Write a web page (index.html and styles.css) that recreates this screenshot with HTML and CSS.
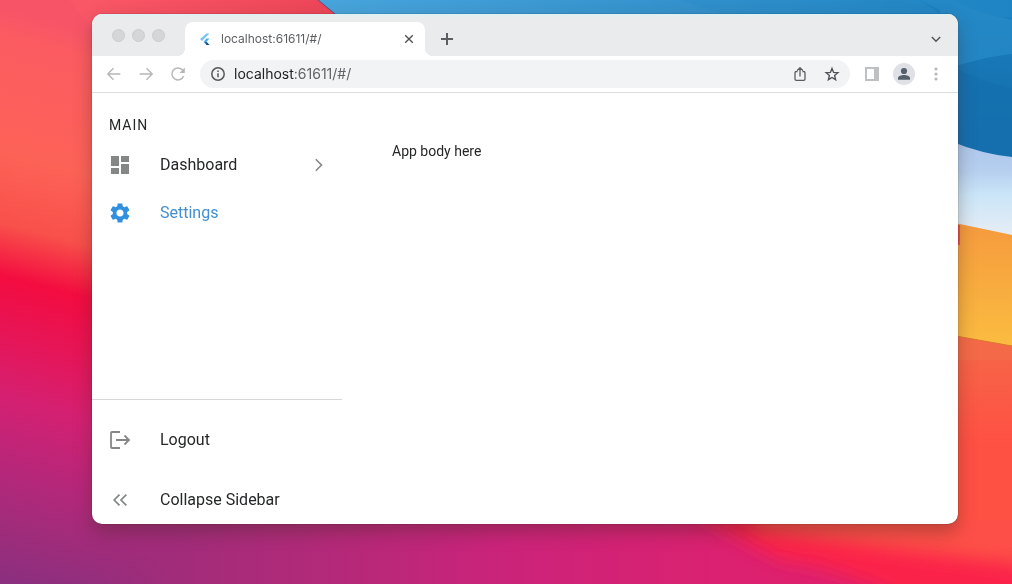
FILE: index.html
```html
<!DOCTYPE html>
<html lang="en">
<head>
<meta charset="utf-8">
<meta name="viewport" content="width=device-width, initial-scale=1">
<title>localhost:61611/#/</title>
<link rel="stylesheet" href="styles.css">
</head>
<body>
<svg class="wallpaper" viewBox="0 0 1012 584" preserveAspectRatio="none" aria-hidden="true">
  <defs>
    <linearGradient id="left" x1="0" y1="0" x2="0" y2="1">
      <stop offset="0" stop-color="#f75468"/><stop offset=".08" stop-color="#f75468"/><stop offset=".12" stop-color="#fb5b61"/><stop offset=".29" stop-color="#fd6257"/>
      <stop offset=".39" stop-color="#f8504a"/><stop offset=".466" stop-color="#f30c40"/><stop offset=".567" stop-color="#e3175c"/>
      <stop offset=".64" stop-color="#d42072"/><stop offset=".73" stop-color="#b92679"/><stop offset=".82" stop-color="#a02c7b"/><stop offset=".92" stop-color="#86307f"/>
    </linearGradient>
    <linearGradient id="top" x1="0" y1="0" x2="1" y2="0">
      <stop offset="0" stop-color="#fa5867"/><stop offset="1" stop-color="#ec4558"/>
    </linearGradient>
    <linearGradient id="bottom" x1="0" y1="0" x2="1" y2="0">
      <stop offset="0" stop-color="#982d7b" stop-opacity="0"/><stop offset=".08" stop-color="#982d7b" stop-opacity="0"/><stop offset=".18" stop-color="#a22c7a"/><stop offset=".3" stop-color="#b02a79"/>
      <stop offset=".5" stop-color="#cb237a"/><stop offset=".72" stop-color="#dc2170"/><stop offset="1" stop-color="#e02068"/>
    </linearGradient>
    <linearGradient id="blue" x1="0" y1="0" x2="1" y2="0">
      <stop offset="0" stop-color="#48a4db"/><stop offset=".6" stop-color="#328fca"/><stop offset="1" stop-color="#197fc0"/>
    </linearGradient>
    <linearGradient id="deep" x1="0" y1="0" x2="0" y2="1">
      <stop offset="0" stop-color="#1b83c4"/><stop offset=".45" stop-color="#1775b3"/><stop offset="1" stop-color="#166dab"/>
    </linearGradient>
    <linearGradient id="ice" x1="0" y1="0" x2="0" y2="1">
      <stop offset="0" stop-color="#adc7ec"/><stop offset=".3" stop-color="#b6cfef"/><stop offset=".55" stop-color="#cbe5f8"/><stop offset="1" stop-color="#e9eef4"/>
    </linearGradient>
    <linearGradient id="amber" x1="0" y1="0" x2="0" y2="1">
      <stop offset="0" stop-color="#f59a3e"/><stop offset="1" stop-color="#fbbd40"/>
    </linearGradient>
    <linearGradient id="coral" x1="0" y1="0" x2="0" y2="1">
      <stop offset="0" stop-color="#f46a48"/><stop offset=".6" stop-color="#ff5044"/><stop offset="1" stop-color="#ff5044"/>
    </linearGradient>
    <filter id="soft" x="-20%" y="-50%" width="140%" height="200%"><feGaussianBlur stdDeviation="9"/></filter>
  </defs>
  <rect width="1012" height="584" fill="#cc2075"/>
  <rect x="-10" y="-50" width="260" height="700" fill="url(#left)" transform="skewY(14)"/>
  <path d="M70 0H340V30H92z" fill="url(#top)"/>
  <rect y="520" width="1012" height="64" fill="url(#bottom)"/>
  <path d="M680 505H1050V620H940Q860 570 780 560z" fill="#fb2149" filter="url(#soft)"/>
  <path d="M740 490H1050V568Q920 555 760 530z" fill="#fd4f46" filter="url(#soft)"/>
  <path d="M940 330H1012V520H940z" fill="url(#coral)"/>
  <path d="M318 0H1012V170H600L335 14z" fill="url(#blue)"/>
  <path d="M680 0Q710 12 740 17H1012V0z" fill="#288bc9" opacity=".4"/>
  <path d="M948 0C970 9 990 15 1012 19V170H940V14L920 0z" fill="url(#deep)"/>
  <path d="M920 0H950C974 10 994 16 1012 20V54C990 56 970 62 940 70V10z" fill="#278ac7" opacity=".8"/>
  <path d="M950 66Q982 82 1012 88V170H950z" fill="#156fae" opacity=".7"/>
  <path d="M950 141Q982 154 1012 157V240H950z" fill="url(#ice)"/>
  <path d="M950 222Q984 229 1012 235V350H950z" fill="url(#amber)"/>
  <path d="M950 335L1012 346V360H950z" fill="#f46a48"/>
  <path d="M950 335L1012 346" stroke="#dc742e"/>
  <path d="M959 225V245" stroke="#f04e4c" stroke-width="2"/>
  <path d="M318 0L335 14" stroke="#703d70"/>
</svg>

<div class="desktop">
<div class="window">
  <div class="tabstrip">
    <div class="lights"><span class="light"></span><span class="light"></span><span class="light"></span></div>
    <div class="tab">
      <svg class="favicon" viewBox="0 0 16 16" aria-hidden="true">
        <path d="M9.5 2.500H12.500L5 10 3 8z" fill="#7cc4f0"/>
        <path d="M9.500 7.500H12.500L9.500 10.800 12.500 14H9.500L6.500 11z" fill="#4aa9e8"/>
        <path d="M8 11L9.800 11.200 12.500 14H9.500z" fill="#1b4f82"/>
      </svg>
      <span class="tab-title">localhost:61611/#/</span>
      <button class="icon-button tab-close" aria-label="Close tab">
        <svg viewBox="0 0 16 16"><path d="M4.200 4.200l7.600 7.600M11.800 4.200l-7.600 7.600" stroke="#505356" stroke-width="1.400" fill="none"/></svg>
      </button>
    </div>
    <button class="icon-button new-tab" aria-label="New tab">
      <svg viewBox="0 0 16 16"><path d="M8 2v12M2 8h12" stroke="#5b5e62" stroke-width="2" fill="none"/></svg>
    </button>
    <button class="icon-button tab-search" aria-label="Search tabs">
      <svg viewBox="0 0 16 16"><path d="M3.800 6l4.200 4.200L12.200 6" stroke="#505459" stroke-width="1.500" fill="none"/></svg>
    </button>
  </div>

  <div class="toolbar">
    <div class="nav">
      <button class="icon-button" aria-label="Back"><svg viewBox="0 0 16 16"><path d="M14.300 8H2M7.500 2.300L1.800 8l5.700 5.700" stroke="#b5b7b9" stroke-width="1.400" fill="none"/></svg></button>
      <button class="icon-button" aria-label="Forward"><svg viewBox="0 0 16 16"><path d="M1.700 8H14M8.500 2.300L14.200 8l-5.700 5.700" stroke="#b5b7b9" stroke-width="1.400" fill="none"/></svg></button>
      <button class="icon-button" aria-label="Reload"><svg viewBox="0 0 16 16"><path d="M13.600 10A6 6 0 1 1 12.300 3.800L13 4.500" stroke="#b5b7b9" stroke-width="1.500" fill="none"/><path d="M14.800 1.600V7H9.400z" fill="#b5b7b9"/></svg></button>
    </div>
    <div class="omnibox">
      <button class="icon-button" aria-label="Site information"><svg viewBox="0 0 16 16"><circle cx="8" cy="8" r="6.200" stroke="#55585c" stroke-width="1.500" fill="none"/><path d="M8 7.200v4M8 4.500v1.500" stroke="#55585c" stroke-width="1.500"/></svg></button>
      <span class="address"><span class="host">localhost</span>:61611/#/</span>
      <button class="icon-button" aria-label="Share"><svg viewBox="0 0 16 16"><path d="M5.500 5.500H4.300Q3 5.500 3 6.800V13q0 1.300 1.300 1.300h7.400Q13 14.300 13 13V6.800Q13 5.500 11.700 5.500H10.500M8 10.500V2M5.200 4.500L8 1.700l2.800 2.800" stroke="#5b5e62" stroke-width="1.300" stroke-linejoin="round" fill="none"/></svg></button>
      <button class="icon-button" aria-label="Bookmark"><svg viewBox="0 0 16 16"><path d="M8 2.400l1.600 4 4.300.3-3.300 2.800 1 4.200L8 11.500l-3.600 2.200 1-4.200-3.300-2.800 4.300-.3z" stroke="#505459" stroke-width="1.400" fill="none"/></svg></button>
    </div>
    <div class="actions">
      <button class="icon-button" aria-label="Side panel"><svg viewBox="0 0 16 16"><path d="M1 1h14v14H1zM3 3v10h7V3z" fill="#bfc0c1" fill-rule="evenodd"/></svg></button>
      <button class="icon-button avatar" aria-label="Profile"><svg viewBox="0 0 16 16"><circle cx="8" cy="5" r="3.100" fill="#54606b"/><path d="M2 13.800V12c0-2 3.500-3 6-3s6 1 6 3v1.800z" fill="#54606b"/></svg></button>
      <button class="icon-button" aria-label="Menu"><svg viewBox="0 0 16 16"><g fill="#b5b7b9"><circle cx="8" cy="3" r="1.600"/><circle cx="8" cy="8" r="1.600"/><circle cx="8" cy="13" r="1.600"/></g></svg></button>
    </div>
  </div>

  <div class="page">
    <nav class="sidebar">
      <div class="menu">
        <h2 class="heading">MAIN</h2>
        <a class="item" href="#dashboard">
          <svg viewBox="0 0 24 24"><path d="M3 13h8V3H3v10zm0 8h8v-6H3v6zm10 0h8V11h-8v10zm0-18v6h8V3h-8z" fill="#858686"/></svg>
          <span class="label">Dashboard</span>
          <svg viewBox="0 0 24 24"><path d="M8.800 6.300l5.700 5.700-5.700 5.700" stroke="#858686" stroke-width="1.600" fill="none"/></svg>
        </a>
        <a class="item active" href="#settings">
          <svg viewBox="0 0 24 24"><path fill="#3090df" d="M19.140 12.940c.04-.3.06-.61.06-.94 0-.32-.02-.64-.07-.94l2.030-1.580c.18-.14.23-.41.12-.61l-1.920-3.320c-.12-.22-.37-.29-.59-.22l-2.390.96c-.5-.38-1.030-.7-1.620-.94l-.36-2.540c-.04-.24-.24-.41-.48-.41h-3.840c-.24 0-.43.17-.47.41l-.36 2.540c-.59.24-1.130.57-1.620.94l-2.390-.96c-.22-.08-.47 0-.59.22L2.740 8.870c-.12.21-.08.47.12.61l2.030 1.580c-.05.3-.09.63-.09.94s.02.64.07.94l-2.030 1.580c-.18.14-.23.41-.12.610l1.920 3.320c.12.22.37.29.59.22l2.390-.96c.5.38 1.030.7 1.620.94l.36 2.540c.05.24.24.41.48.41h3.840c.24 0 .44-.17.47-.41l.36-2.540c.59-.24 1.130-.56 1.620-.94l2.390.96c.22.08.47 0 .59-.22l1.920-3.320c.12-.22.07-.47-.12-.61l-2.010-1.580zM12 15.600c-1.980 0-3.600-1.620-3.600-3.600s1.620-3.600 3.600-3.600 3.600 1.620 3.600 3.600-1.620 3.600-3.600 3.600z"/></svg>
          <span class="label">Settings</span>
        </a>
      </div>
      <div class="footer">
        <a class="item" href="#logout">
          <svg viewBox="0 0 24 24"><path d="M12 4H4Q3 4 3 5v14q0 1 1 1H12M8 12h12.500M16.500 7.500L21 12l-4.500 4.500" stroke="#858686" stroke-width="1.800" fill="none"/></svg>
          <span class="label">Logout</span>
        </a>
        <button class="item">
          <svg viewBox="0 0 24 24"><path d="M11.500 6.700L6.200 12l5.300 5.300M18.300 6.700L13 12l5.300 5.300" stroke="#858686" stroke-width="1.700" fill="none"/></svg>
          <span class="label">Collapse Sidebar</span>
        </button>
      </div>
    </nav>
    <main class="content">App body here</main>
  </div>
</div>
</div>
</body>
</html>
```

FILE: styles.css
```css
* { box-sizing: border-box; }
body {
  margin: 0;
  font-family: Roboto, "Liberation Sans", sans-serif;
  color: #262728;
}
.wallpaper {
  position: fixed;
  inset: 0;
  z-index: -1;
  width: 100%;
  height: 100%;
}
.desktop {
  display: flex;
  min-height: 100vh;
  padding: 14px 54px 60px 92px;
}
.window {
  display: flex;
  flex: 1;
  flex-direction: column;
  overflow: hidden;
  border-radius: 10px;
  background: #fff;
  box-shadow: 0 0 1px rgba(0, 0, 0, .7), 0 8px 18px rgba(60, 40, 30, .35);
}
.icon-button {
  display: flex;
  flex: none;
  align-items: center;
  justify-content: center;
  width: 16px;
  height: 16px;
  padding: 0;
  border: 0;
  background: none;
}
.icon-button svg { width: 16px; height: 16px; }

.tabstrip {
  display: flex;
  align-items: flex-end;
  height: 42px;
  padding-right: 14px;
  background: #e9ebed;
  box-shadow: inset 0 2px 2px #dff0f3;
}
.lights {
  display: flex;
  align-self: stretch;
  align-items: center;
  gap: 7px;
  width: 93px;
  padding-left: 20px;
}
.light {
  width: 13px;
  height: 13px;
  border: 1px solid #cbcccd;
  border-radius: 50%;
  background: #d5d6d8;
}
.tab {
  position: relative;
  display: flex;
  align-items: center;
  gap: 8px;
  width: 240px;
  height: 34px;
  padding: 0 8px 0 12px;
  border-radius: 8px 8px 0 0;
  background: #fff;
}
.tab::before,
.tab::after {
  content: "";
  position: absolute;
  bottom: 0;
  width: 8px;
  height: 8px;
}
.tab::before {
  right: 100%;
  background: radial-gradient(circle at 0 0, transparent 8px, #fff 8px);
}
.tab::after {
  left: 100%;
  background: radial-gradient(circle at 100% 0, transparent 8px, #fff 8px);
}
.favicon { width: 16px; height: 16px; }
.tab-title {
  flex: 1;
  font: 12px/16px Inter, sans-serif;
  color: #5b5e61;
}
.new-tab, .tab-search { margin-bottom: 9px; }
.new-tab { margin-left: 14px; }
.tab-search { margin-left: auto; }

.toolbar {
  display: flex;
  align-items: center;
  gap: 14px;
  height: 37px;
  padding: 0 14px;
  border-bottom: 1px solid #dcdddf;
}
.nav, .actions {
  display: flex;
  align-items: center;
  gap: 16px;
}
.omnibox {
  display: flex;
  flex: 1;
  align-items: center;
  gap: 16px;
  height: 28px;
  padding: 0 10px;
  border-radius: 14px;
  background: #f1f3f4;
}
.address {
  flex: 1;
  margin-left: -8px;
  font: 14px/20px Inter, sans-serif;
  color: #606367;
}
.host { color: #202225; }
.actions { gap: 13px; }
.avatar {
  width: 22px;
  height: 22px;
  border-radius: 50%;
  background: #dfe1e6;
}

.page { display: flex; flex: 1; }
.sidebar {
  display: flex;
  flex-direction: column;
  width: 250px;
}
.menu { flex: 1; padding-top: 24px; }
.heading {
  margin: 0 0 8px;
  padding: 0 17px;
  font-size: 14px;
  font-weight: 400;
  line-height: 16px;
  letter-spacing: 1px;
}
.item {
  display: flex;
  align-items: center;
  width: 100%;
  height: 48px;
  padding: 0 11px 0 16px;
  border: 0;
  background: none;
  color: inherit;
  font: 16px/20px Roboto, sans-serif;
  text-align: left;
  text-decoration: none;
}
.item svg { flex: none; width: 24px; height: 24px; }
.label { flex: 1; margin-left: 28px; }
.active { color: #438fcf; }
.footer {
  display: flex;
  flex-direction: column;
  gap: 12px;
  padding-top: 16px;
  border-top: 1px solid #d6d8da;
}
.content {
  flex: 1;
  padding: 50px;
  font-size: 14px;
  line-height: 16px;
}
```
